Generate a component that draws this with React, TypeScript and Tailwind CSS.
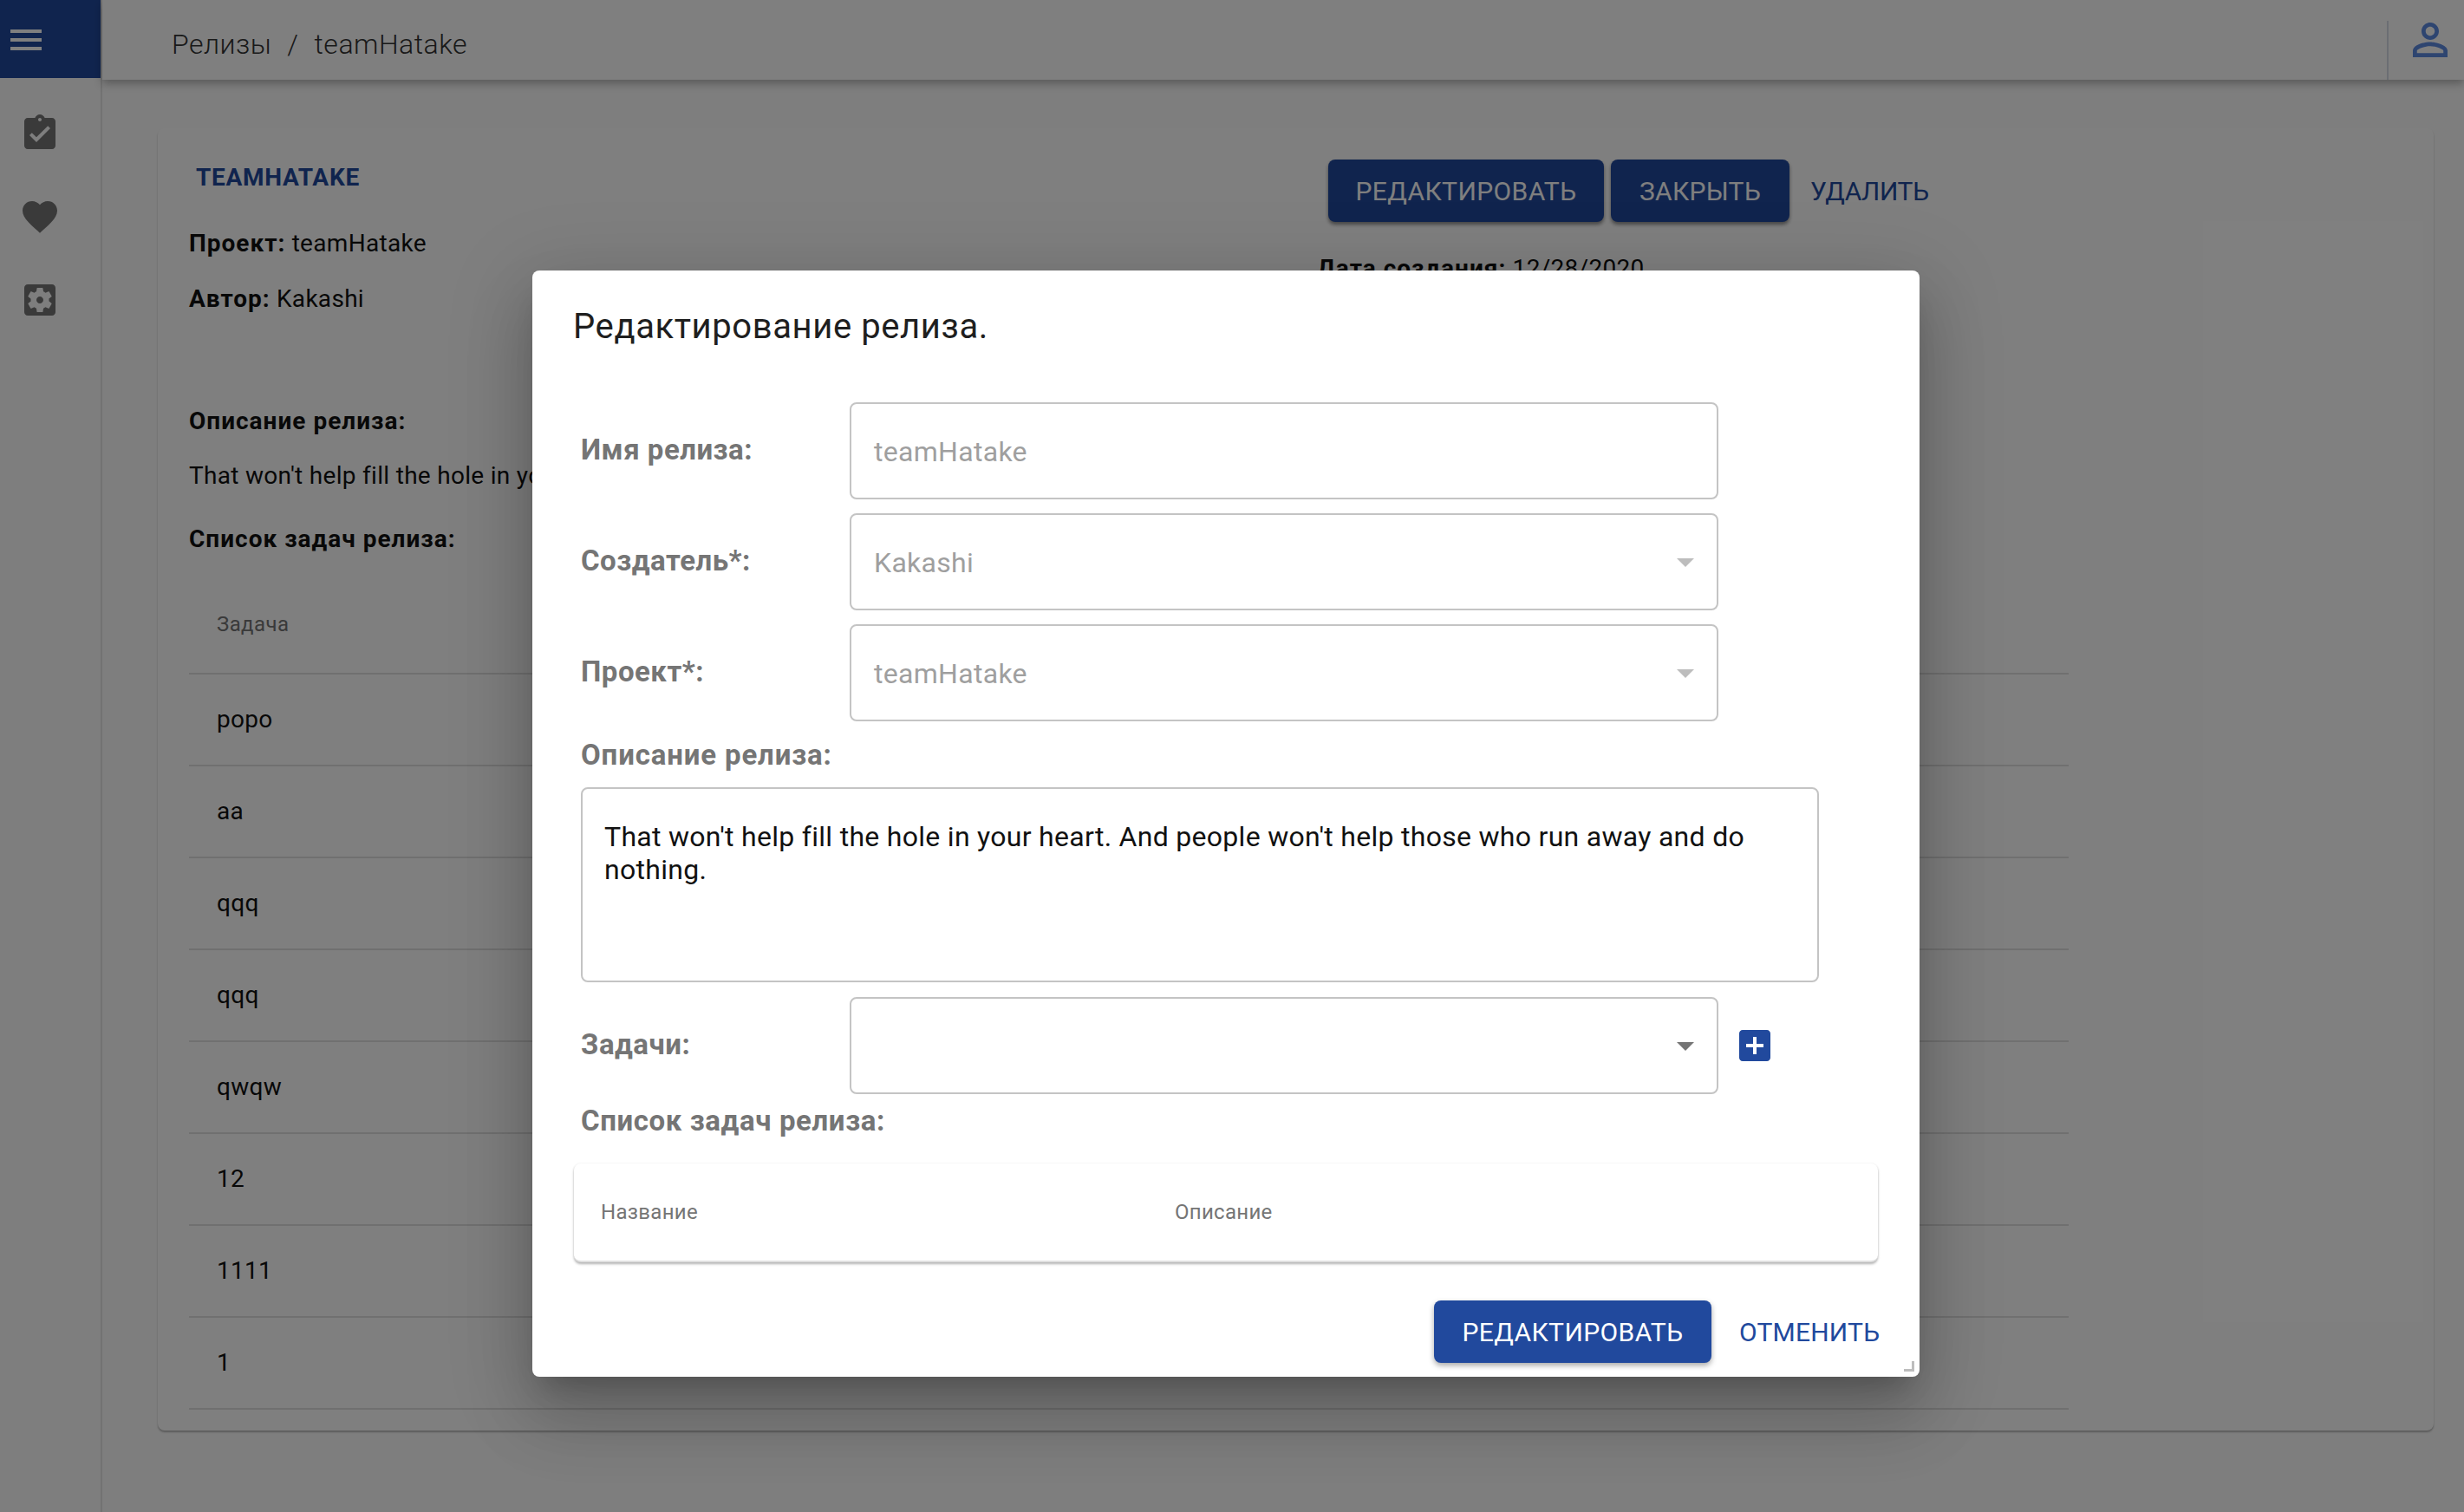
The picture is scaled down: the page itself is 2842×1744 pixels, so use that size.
import React from "react";

const P = {
  task: "M19 3h-4.18C14.4 1.84 13.3 1 12 1c-1.3 0-2.4.84-2.82 2H5c-1.1 0-2 .9-2 2v14c0 1.1.9 2 2 2h14c1.1 0 2-.9 2-2V5c0-1.1-.9-2-2-2zm-7 0c.55 0 1 .45 1 1s-.45 1-1 1-1-.45-1-1 .45-1 1-1zm-2 14l-4-4 1.41-1.41L10 14.17l6.59-6.59L18 9l-8 8z",
  heart: "M12 21.35l-1.45-1.32C5.4 15.36 2 12.28 2 8.5 2 5.42 4.42 3 7.5 3c1.74 0 3.41.81 4.5 2.09C13.09 3.81 14.76 3 16.5 3 19.58 3 22 5.42 22 8.5c0 3.78-3.4 6.86-8.55 11.54L12 21.35z",
  gear: "M12 10c-1.1 0-2 .9-2 2s.9 2 2 2 2-.9 2-2-.9-2-2-2zm7-7H5c-1.11 0-2 .9-2 2v14c0 1.1.89 2 2 2h14c1.11 0 2-.9 2-2V5c0-1.1-.89-2-2-2zm-1.75 9c0 .23-.02.46-.05.68l1.48 1.16c.13.11.17.3.08.45l-1.4 2.42c-.09.15-.27.21-.43.15l-1.74-.7c-.36.28-.76.51-1.18.69l-.26 1.85c-.03.17-.18.3-.35.3h-2.8c-.17 0-.32-.13-.35-.29l-.26-1.85c-.43-.18-.82-.41-1.18-.69l-1.74.7c-.16.06-.34 0-.43-.15l-1.4-2.42c-.09-.15-.05-.34.08-.45l1.48-1.16c-.03-.23-.05-.46-.05-.69 0-.23.02-.46.05-.68l-1.48-1.16c-.13-.11-.17-.3-.08-.45l1.4-2.42c.09-.15.27-.21.43-.15l1.74.7c.36-.28.76-.51 1.18-.69l.26-1.85c.03-.17.18-.3.35-.3h2.8c.17 0 .32.13.35.29l.26 1.85c.43.18.82.41 1.18.69l1.74-.7c.16-.06.34 0 .43.15l1.4 2.42c.09.15.05.34-.08.45l-1.48 1.16c.03.23.05.46.05.69z",
  menu: "M3 18h18v-2H3v2zm0-5h18v-2H3v2zm0-7v2h18V6H3z",
  person: "M12 5.9c1.16 0 2.1.94 2.1 2.1s-.94 2.1-2.1 2.1S9.9 9.16 9.9 8s.94-2.1 2.1-2.1m0 9c2.97 0 6.1 1.46 6.1 2.1v1.1H5.9V17c0-.64 3.13-2.1 6.1-2.1M12 4C9.79 4 8 5.79 8 8s1.79 4 4 4 4-1.79 4-4-1.79-4-4-4zm0 9c-2.67 0-8 1.34-8 4v3h16v-3c0-2.66-5.33-4-8-4z",
  add: "M19 3H5c-1.11 0-2 .9-2 2v14c0 1.1.89 2 2 2h14c1.1 0 2-.9 2-2V5c0-1.1-.9-2-2-2zm-2 10h-4v4h-2v-4H7v-2h4V7h2v4h4v2z",
  drop: "M7 10l5 5 5-5z",
};

function Icon({ d, className }: { d: string; className: string }) {
  return (
    <svg viewBox="0 0 24 24" fill="currentColor" className={className}>
      <path d={d} />
    </svg>
  );
}

const rows = ["popo", "aa", "qqq", "qqq", "qwqw", "12", "1111", "1"];

function Field({ label, value, arrow, dark }: { label: string; value?: string; arrow?: boolean; dark?: boolean }) {
  return (
    <div className="flex items-center h-[112px] pl-[56px]">
      <div className="w-[310px] text-[33px] leading-[38px] font-bold tracking-[0.5px] text-[#757575] relative top-[-1px]">{label}</div>
      <div className="relative flex items-center w-[1002px] h-[112px] rounded-[8px] border-2 border-[#c4c4c4] pl-[26px] pt-[1px] text-[32px] tracking-[0.3px] text-[#9f9f9f]">
        {value}
        {arrow && (
          <Icon d={P.drop} className={`absolute right-[12px] top-[30px] w-[48px] h-[48px] ${dark ? "text-[#757575]" : "text-[#bdbdbd]"}`} />
        )}
      </div>
    </div>
  );
}

export default function App() {
  return (
    <div className="relative w-[2842px] h-[1744px] overflow-hidden bg-[#fcfcfc] font-['Roboto',sans-serif] text-[#1f1f1f] flex">
      {/* sidebar */}
      <aside className="w-[118px] h-full shrink-0 border-r-2 border-[#e4e4e4] flex flex-col">
        <div className="h-[90px] w-[116px] bg-[#21499d] flex items-center pl-[6px] pt-[2px]">
          <Icon d={P.menu} className="w-[48px] h-[48px] text-white" />
        </div>
        <div className="flex flex-col pl-[22px] pt-[40px] gap-[48px] text-[#757575]">
          <Icon d={P.task} className="w-[48px] h-[48px]" />
          <Icon d={P.heart} className="w-[48px] h-[48px]" />
          <Icon d={P.gear} className="w-[48px] h-[48px]" />
        </div>
      </aside>

      <div className="flex-1 min-w-0 flex flex-col">
        {/* top bar */}
        <header className="h-[92px] bg-white shadow-[0_4px_10px_rgba(0,0,0,0.3)] flex items-stretch relative z-10 pl-[80px]">
          <div className="flex-1 flex items-center text-[32px] tracking-[0.5px] font-light text-[#333] gap-[18px] pt-[10px]">
            <span>Релизы</span>
            <span>/</span>
            <span>teamHatake</span>
          </div>
          <div className="mt-[24px] w-[89px] border-l-2 border-[#d6dde6] pl-[18px] text-[#5d8ae0]">
            <Icon d={P.person} className="w-[60px] h-[60px] mt-[-8px]" />
          </div>
        </header>

        {/* card */}
        <main className="pl-[64px] pr-[35px] pt-[56px]">
          <section className="bg-white h-[1502px] rounded-[8px] shadow-[0_2px_2px_rgba(0,0,0,0.28)] relative">
            <div className="flex">
              <div className="w-[1340px] pl-[36px] shrink-0 text-[28px] leading-[36px] tracking-[0.3px] text-[#111]">
                <div className="pl-[8px] pt-[39px] font-bold tracking-[0.7px] text-[#21499d] uppercase">teamHatake</div>
                <p className="mt-[40px]"><b className="font-bold tracking-[1px]">Проект:</b> teamHatake</p>
                <p className="mt-[28px]"><b className="font-bold tracking-[1px]">Автор:</b> Kakashi</p>
                <p className="mt-[105px] font-bold tracking-[1px]">Описание релиза:</p>
                <p className="mt-[27px] whitespace-nowrap">That won't help fill the hole in your heart.</p>
                <p className="mt-[37px] font-bold tracking-[1px]">Список задач релиза:</p>
              </div>
              <div className="pt-[36px]">
                <div className="flex items-center ml-[10px]">
                  <button className="h-[72px] w-[318px] rounded-[8px] bg-[#21499d] text-white text-[30px] tracking-[0.4px] shadow-[0_3px_4px_rgba(0,0,0,0.45)]">РЕДАКТИРОВАТЬ</button>
                  <button className="h-[72px] w-[206px] ml-[8px] rounded-[8px] bg-[#21499d] text-white text-[30px] tracking-[0.3px] shadow-[0_3px_4px_rgba(0,0,0,0.45)]">ЗАКРЫТЬ</button>
                  <span className="ml-[24px] text-[30px] tracking-[-0.4px] text-[#21499d]">УДАЛИТЬ</span>
                </div>
                <p className="mt-[36px] ml-[-3px] text-[28px] leading-[36px] tracking-[0.3px] text-[#111]"><b className="font-bold tracking-[1px]">Дата создания:</b> 12/28/2020</p>
              </div>
            </div>
            <div className="ml-[36px] w-[2168px] absolute top-[516px]">
              <div className="h-[114px] border-b-2 border-[#e0e0e0] pl-[32px] flex items-center text-[24px] tracking-[0.4px] text-[#757575]">Задача</div>
              {rows.map((r, i) => (
                <div key={i} className="h-[106px] border-b-2 border-[#e0e0e0] pl-[32px] flex items-center text-[28px] tracking-[0.3px] text-[#111]">{r}</div>
              ))}
            </div>
          </section>
        </main>
      </div>

      {/* backdrop */}
      <div className="absolute inset-0 z-20 bg-black/50" />

      {/* dialog */}
      <div className="absolute z-30 left-[614px] top-[312px] w-[1600px] h-[1276px] bg-white rounded-[8px] shadow-[0_22px_30px_-14px_rgba(0,0,0,0.2),0_48px_76px_6px_rgba(0,0,0,0.14),0_18px_92px_16px_rgba(0,0,0,0.12)]">
        <h2 className="pt-[41px] pl-[47px] text-[40px] leading-[48px] tracking-[0.6px] text-[#1f1f1f]">Редактирование релиза.</h2>
        <div className="mt-[63px] flex flex-col gap-[16px]">
          <Field label="Имя релиза:" value="teamHatake" />
          <Field label="Создатель*:" value="Kakashi" arrow />
          <Field label="Проект*:" value="teamHatake" arrow />
        </div>
        <div className="mt-[20px] pl-[56px] text-[33px] leading-[38px] font-bold tracking-[0.85px] text-[#757575]">Описание релиза:</div>
        <div className="mt-[18px] ml-[56px] w-[1428px] h-[225px] rounded-[8px] border-2 border-[#c4c4c4] pl-[25px] pr-[60px] pt-[36px] text-[32px] leading-[38px] tracking-[0.29px] text-[#111]">
          That won't help fill the hole in your heart. And people won't help those who run away and do nothing.
        </div>
        <div className="mt-[17px] flex items-center">
          <Field label="Задачи:" arrow dark />
          <Icon d={P.add} className="w-[48px] h-[48px] ml-[18px] text-[#21499d]" />
        </div>
        <div className="mt-[12px] pl-[56px] text-[33px] leading-[38px] font-bold tracking-[0.6px] text-[#757575]">Список задач релиза:</div>
        <div className="mt-[30px] ml-[48px] w-[1504px] h-[114px] rounded-[8px] bg-white border-b-2 border-[#e0e0e0] shadow-[0_2px_3px_rgba(0,0,0,0.3),0_0_3px_rgba(0,0,0,0.05)] flex items-center text-[24px] tracking-[0.3px] text-[#757575]">
          <div className="pl-[31px] w-[693px]">Название</div>
          <div>Описание</div>
        </div>
        <div className="mt-[44px] flex items-center ml-[1040px]">
          <button className="h-[72px] w-[320px] rounded-[8px] bg-[#21499d] text-white text-[30px] tracking-[0.4px] shadow-[0_3px_6px_rgba(0,0,0,0.35)]">РЕДАКТИРОВАТЬ</button>
          <span className="ml-[32px] text-[30px] tracking-[0.2px] text-[#21499d]">ОТМЕНИТЬ</span>
        </div>
        <svg viewBox="0 0 12 12" className="absolute right-[6px] bottom-[6px] w-[12px] h-[12px] text-[#bdbdbd]" fill="currentColor">
          <path d="M9 0h3v12H0V9h9z" />
        </svg>
      </div>
    </div>
  );
}
